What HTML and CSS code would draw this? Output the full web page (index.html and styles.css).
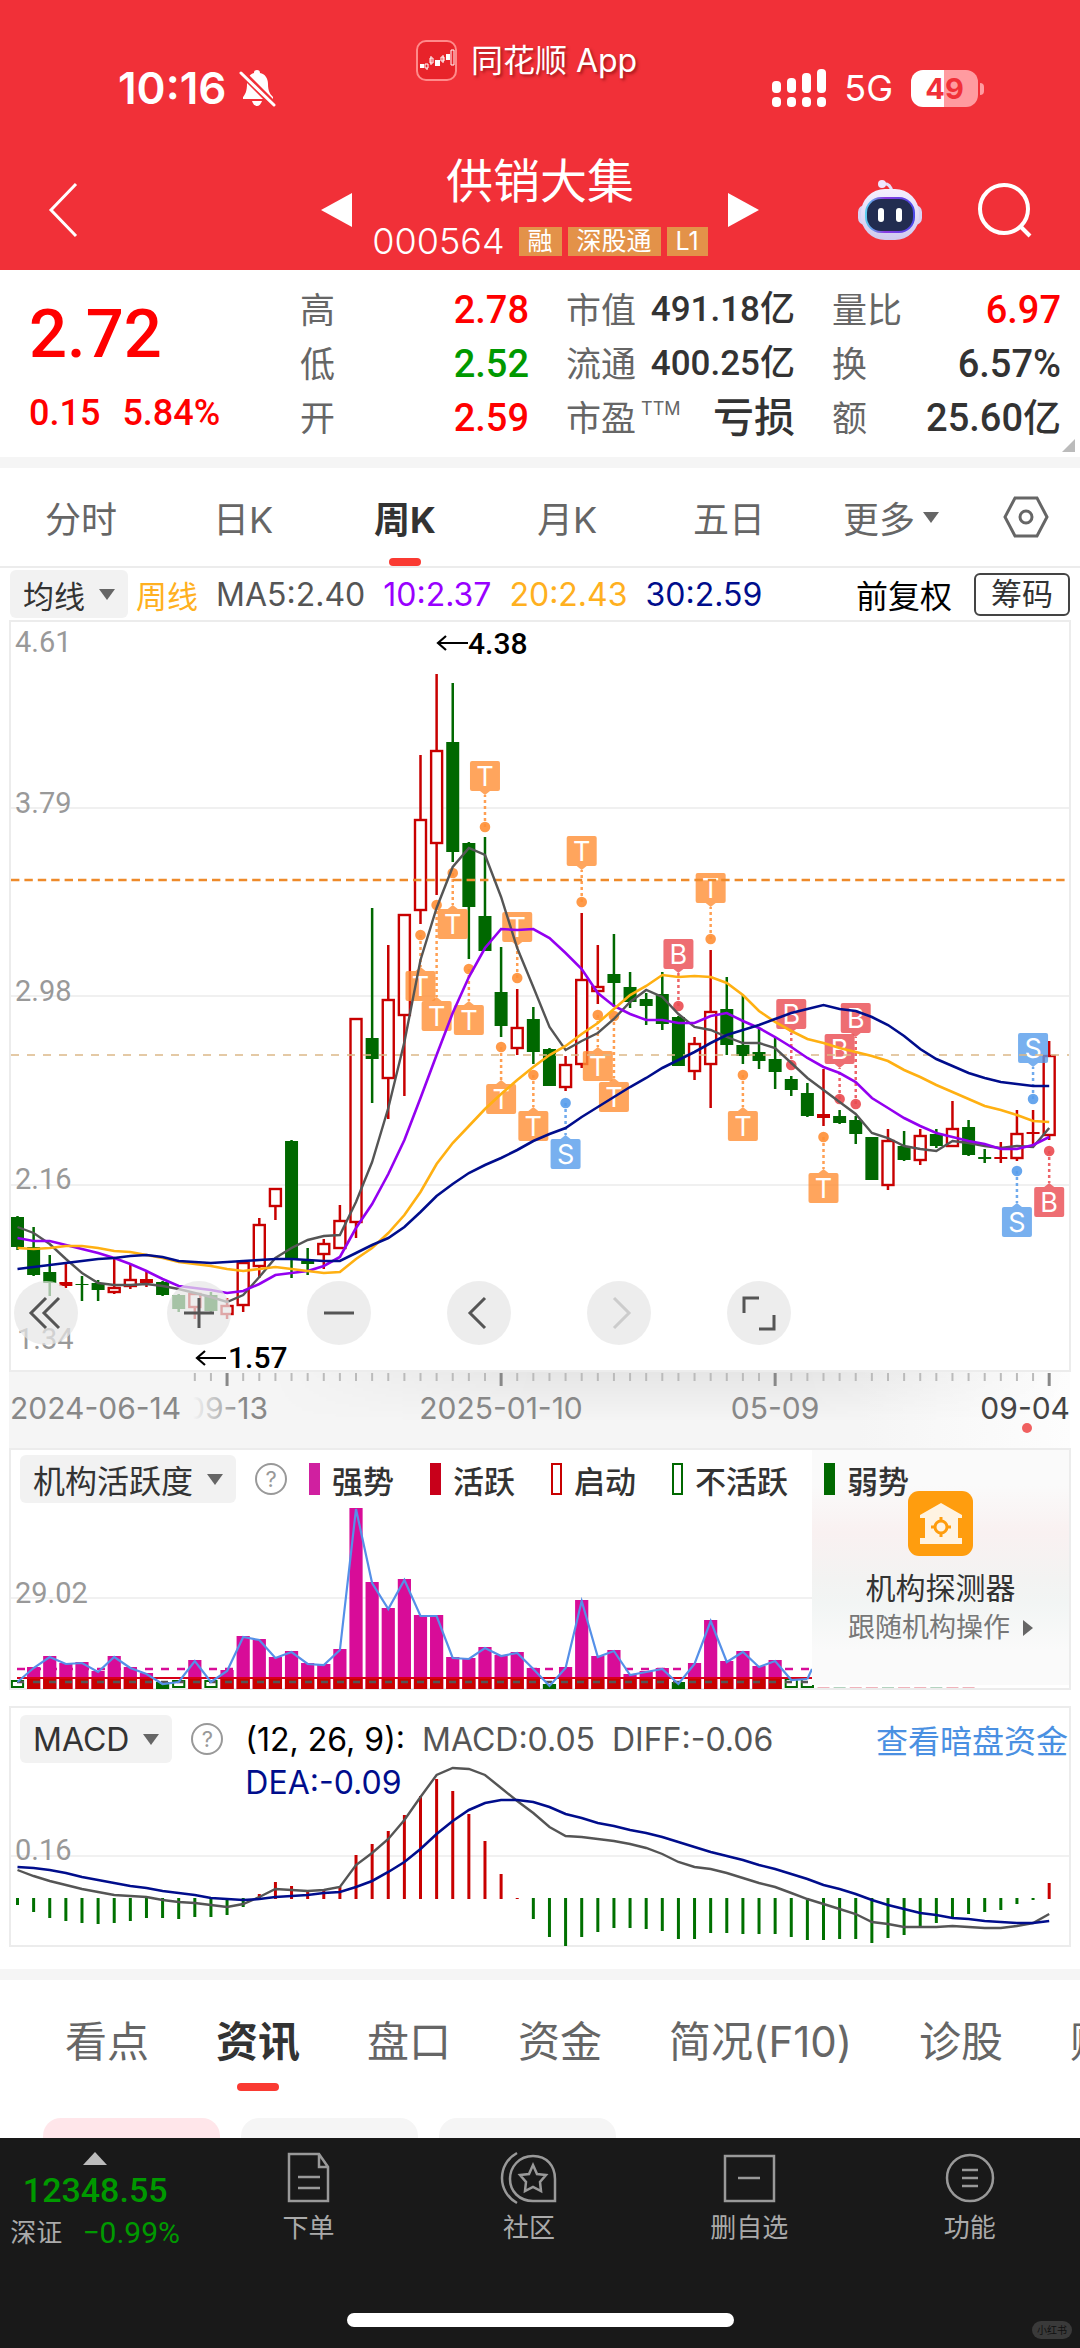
FILE: index.html
```
<!DOCTYPE html>
<html lang="zh-CN">
<head>
    <meta charset="UTF-8">
    <meta name="viewport" content="width=device-width, initial-scale=1.0">
    <title>供销大集 000564</title>
    <link rel="stylesheet" href="styles.css">
</head>
<body>
    <div class="app">
        <!-- Header -->
        <header class="header">
            <div class="status-bar">
                <div class="status-left">
                    <span class="clock">10:16</span>
                    <svg width="38" height="38" viewBox="0 0 38 38" fill="#fff">
                        <path d="M19 1c2 0 3 1 3 3 5 1 8 5 8 11 0 7 2 10 5 13v2H5v-2c2-2 4-6 4-13C9 9 12 5 16 4c0-2 1-3 3-3z"/>
                        <path d="M14 32h10c-1 3-3 5-5 5s-4-2-5-5z"/>
                        <path d="M3 3l33 33" stroke="#f13038" stroke-width="7"/>
                        <path d="M3 4l33 32" stroke="#fff" stroke-width="3" stroke-linecap="round"/>
                    </svg>
                </div>
                <div class="app-mark">
                    <svg width="41" height="41" viewBox="0 0 41 41" fill="none">
                        <rect x="1" y="1" width="39" height="39" rx="9" fill="#e8232a" stroke="#ff8a8a" stroke-width="2"/>
                        <path d="M4 24h4v4H4zM19 20h5v6h-5zM30 14h4v6h-4z" fill="#fff"/>
                        <path d="M9 24h3v4H9zM11 28v2M14 18h3v5h-3zM15 16v9M25 17h3v4h-3zM27 15v8M35 10h3v15h-3z" stroke="#fff"/>
                    </svg>
                    <span>同花顺 App</span>
                </div>
                <div class="status-right">
                    <svg width="54" height="38" viewBox="0 0 54 38" fill="#fff">
                        <rect x="0" y="12" width="9" height="12" rx="4"/><rect x="15" y="9" width="9" height="15" rx="4"/><rect x="30" y="4" width="9" height="20" rx="4"/><rect x="45" y="0" width="9" height="24" rx="4"/>
                        <rect x="0" y="28" width="9" height="10" rx="4"/><rect x="15" y="28" width="9" height="10" rx="4"/><rect x="30" y="28" width="9" height="10" rx="4"/><rect x="45" y="28" width="9" height="10" rx="4"/>
                    </svg>
                    <span class="network">5G</span>
                    <span class="battery"><b>4</b><b class="pink">9</b></span>
                </div>
            </div>
            <div class="title-bar">
                <button class="icon-btn back" aria-label="返回">
                    <svg width="32" height="54" viewBox="0 0 32 54" fill="none" stroke="#fff" stroke-width="3"><path d="M28 1L3 27l25 26"/></svg>
                </button>
                <div class="stock">
                    <button class="icon-btn" aria-label="上一只"><svg width="31" height="34" viewBox="0 0 31 34" fill="#fff"><path d="M0 17L31 0v34z"/></svg></button>
                    <div class="stock-name">
                        <h1>供销大集</h1>
                        <p><span class="code">000564</span><span class="tag">融</span><span class="tag">深股通</span><span class="tag">L1</span></p>
                    </div>
                    <button class="icon-btn" aria-label="下一只"><svg width="31" height="34" viewBox="0 0 31 34" fill="#fff"><path d="M31 17L0 0v34z"/></svg></button>
                </div>
                <div class="tools">
                    <button class="icon-btn" aria-label="智能助手">
                        <svg width="66" height="62" viewBox="0 0 66 62">
                            <defs>
                                <linearGradient id="shell" x2="0" y2="1"><stop offset="0" stop-color="#f5efff"/><stop offset="1" stop-color="#cfc9ee"/></linearGradient>
                                <linearGradient id="rim"><stop offset="0" stop-color="#5ad2f0"/><stop offset=".4" stop-color="#8a3ae0"/><stop offset="1" stop-color="#4a4ae8"/></linearGradient>
                            </defs>
                            <path d="M25 5c6-1 9 2 10 8" fill="none" stroke="#e6def8" stroke-width="3"/>
                            <circle cx="25" cy="5" r="4" fill="#efe6ff"/>
                            <rect x="1" y="26" width="64" height="20" rx="7" fill="#d8d2f4"/>
                            <rect x="4" y="10" width="58" height="51" rx="24" fill="url(#shell)"/>
                            <rect x="8" y="18" width="50" height="36" rx="16" fill="url(#rim)"/>
                            <rect x="10" y="20" width="46" height="32" rx="14" fill="#222c50"/>
                            <rect x="21" y="29" width="6" height="14" rx="3" fill="#fff"/><rect x="39" y="29" width="6" height="14" rx="3" fill="#fff"/>
                        </svg>
                    </button>
                    <button class="icon-btn" aria-label="搜索">
                        <svg width="54" height="54" viewBox="0 0 54 54" fill="none" stroke="#fff" stroke-width="4"><circle cx="26" cy="26" r="24"/><path d="M42 43l10 10"/></svg>
                    </button>
                </div>
            </div>
        </header>

        <!-- Quote -->
        <section class="quote">
            <div class="price">
                <div class="last">2.72</div>
                <div class="change"><span>0.15</span><span>5.84%</span></div>
            </div>
            <dl>
                <div><dt>高</dt><dd class="up">2.78</dd></div>
                <div><dt>低</dt><dd class="down">2.52</dd></div>
                <div><dt>开</dt><dd class="up">2.59</dd></div>
            </dl>
            <dl class="narrow">
                <div><dt>市值</dt><dd>491.18亿</dd></div>
                <div><dt>流通</dt><dd>400.25亿</dd></div>
                <div><dt>市盈<sup>TTM</sup></dt><dd class="loss">亏损</dd></div>
            </dl>
            <dl>
                <div><dt>量比</dt><dd class="up">6.97</dd></div>
                <div><dt>换</dt><dd>6.57%</dd></div>
                <div><dt>额</dt><dd>25.60亿</dd></div>
            </dl>
        </section>

        <!-- Period tabs -->
        <nav class="period-tabs">
            <button>分时</button>
            <button>日K</button>
            <button class="active">周K</button>
            <button>月K</button>
            <button>五日</button>
            <button>更多<i class="caret"></i></button>
            <button aria-label="设置">
                <svg width="46" height="42" viewBox="0 0 46 42" fill="none" stroke="#666" stroke-width="3"><path d="M12 2h22l10 19-10 19H12L2 21z"/><circle cx="23" cy="21" r="6"/></svg>
            </button>
        </nav>

        <div class="ma-row">
            <button class="select-btn">均线<i class="caret"></i></button>
            <span class="orange">周线</span>
            <span class="grey ma">MA5:2.40</span>
            <span class="purple ma">10:2.37</span>
            <span class="orange ma">20:2.43</span>
            <span class="navy ma">30:2.59</span>
            <span class="adjust">前复权</span>
            <button class="chips-btn">筹码</button>
        </div>

        <!-- K line -->
        <section class="panel kline">
            <svg id="kline" viewBox="11 2 1058 748">
                <g class="grid"><path d="M11 188H1069M11 376H1069M11 565H1069"/></g>
                <g class="axis-text">
                    <text x="15" y="32">4.61</text><text x="15" y="193">3.79</text><text x="15" y="381">2.98</text><text x="15" y="569">2.16</text><text x="17" y="729">1.34</text>
                </g>
            </svg>
            <div class="chart-tools">
                <button aria-label="最左"><svg viewBox="0 0 64 64"><path d="M32 17L17 32l15 15M45 17L30 32l15 15"/></svg></button>
                <button aria-label="放大"><svg viewBox="0 0 64 64"><path d="M17 32h30M32 17v30"/></svg></button>
                <button aria-label="缩小"><svg viewBox="0 0 64 64"><path d="M17 32h30"/></svg></button>
                <button aria-label="左移"><svg viewBox="0 0 64 64"><path d="M38 17L23 32l15 15"/></svg></button>
                <button aria-label="右移" disabled><svg viewBox="0 0 64 64"><path d="M27 17l15 15-15 15"/></svg></button>
                <button aria-label="全屏"><svg viewBox="0 0 64 64"><path d="M17 32V17h15M47 34v14H32"/></svg></button>
            </div>
        </section>
        <svg class="date-axis" id="dates" viewBox="0 0 1080 76">
            <defs>
                <linearGradient id="strip"><stop offset="0" stop-color="#f5f5f5"/><stop offset=".8" stop-color="#f5f5f5"/><stop offset="1" stop-color="#fdfdfd"/></linearGradient>
                <linearGradient id="shade" x2="0" y2="1"><stop offset="0" stop-color="#000" stop-opacity=".06"/><stop offset="1" stop-color="#000" stop-opacity="0"/></linearGradient>
                <linearGradient id="shadeMask"><stop offset=".1" stop-color="#000"/><stop offset=".4" stop-color="#fff"/><stop offset=".7" stop-color="#fff"/><stop offset="1" stop-color="#000"/></linearGradient>
                <linearGradient id="fade"><stop offset="0" stop-color="#f5f5f5"/><stop offset="1" stop-color="#f5f5f5" stop-opacity="0"/></linearGradient>
                <mask id="shadeArea"><rect x="180" width="890" height="76" fill="url(#shadeMask)"/></mask>
            </defs>
            <rect x="9" width="1061" height="76" fill="url(#strip)"/>
            <rect x="180" width="890" height="50" fill="url(#shade)" mask="url(#shadeArea)"/>
            <g id="ticks"></g>
            <text x="227" y="47" text-anchor="middle">09-13</text>
            <rect x="9" y="16" width="184" height="48" fill="#f5f5f5"/>
            <rect x="193" y="16" width="50" height="48" fill="url(#fade)"/>
            <text x="10" y="47">2024-06-14</text>
            <text x="501" y="47" text-anchor="middle">2025-01-10</text>
            <text x="775" y="47" text-anchor="middle">05-09</text>
            <text x="1070" y="47" text-anchor="end" class="now">09-04</text>
            <circle cx="1027" cy="56" r="5" fill="#f06060"/>
        </svg>

        <!-- Institution activity -->
        <section class="panel">
            <aside class="detector">
                <svg width="65" height="65" viewBox="0 0 65 65">
                    <rect width="65" height="65" rx="11" fill="#ff9d0e"/>
                    <path d="M33 12l21 12v3h-4v20h4v6H12v-6h5V27h-5v-3z" fill="#fff3e2"/>
                    <circle cx="33" cy="36" r="6" fill="none" stroke="#ff9d0e" stroke-width="3"/>
                    <path d="M33 26v4M33 42v4M23 36h4M39 36h4" stroke="#ff9d0e" stroke-width="3"/>
                </svg>
                <strong>机构探测器</strong>
                <a href="#">跟随机构操作<i></i></a>
            </aside>
            <div class="panel-head">
                <button class="select-btn">机构活跃度<i class="caret"></i></button>
                <button class="help" aria-label="说明">?</button>
                <ul class="legend">
                    <li><i class="strong"></i>强势</li>
                    <li><i class="active-bar"></i>活跃</li>
                    <li><i class="start"></i>启动</li>
                    <li><i class="idle"></i>不活跃</li>
                    <li><i class="weak"></i>弱势</li>
                </ul>
            </div>
            <svg id="activity" viewBox="11 68 1058 180">
                <g class="grid"><path d="M11 158H812"/></g>
                <g class="axis-text"><text x="15" y="163">29.02</text></g>
            </svg>
        </section>

        <!-- MACD -->
        <section class="panel macd">
            <div class="panel-head">
                <button class="select-btn">MACD<i class="caret"></i></button>
                <button class="help" aria-label="说明">?</button>
                <div class="macd-values">
                    <span>(12, 26, 9):</span>
                    <span class="grey">MACD:0.05</span>
                    <span class="grey">DIFF:-0.06</span>
                    <span class="navy dea">DEA:-0.09</span>
                </div>
                <a href="#">查看暗盘资金</a>
            </div>
            <svg id="macd" viewBox="11 66 1058 179">
                <g class="grid"><path d="M11 156H1069"/></g>
                <g class="axis-text"><text x="15" y="160">0.16</text></g>
            </svg>
        </section>

        <!-- Info tabs -->
        <nav class="info-tabs">
            <button>看点</button>
            <button class="active">资讯</button>
            <button>盘口</button>
            <button>资金</button>
            <button>简况(F10)</button>
            <button>诊股</button>
            <button>财务</button>
        </nav>
        <div class="chips"><span class="on"></span><span></span><span></span></div>

        <!-- Bottom bar -->
        <footer class="bottom">
            <div class="bottom-row">
                <div class="index">
                    <i></i>
                    <strong>12348.55</strong>
                    <p><span>深证</span><em>−0.99%</em></p>
                </div>
                <a href="#"><svg viewBox="0 0 56 52"><path d="M8 2h30l9 13v34H8zM38 2v13h9M17 25h22M17 36h22"/></svg>下单</a>
                <a href="#"><svg viewBox="0 0 56 52"><path d="M54 49H32C18 49 9 39 9 27S18 4 32 4s22 10 22 23zM16 1C-4 12-4 40 16 51"/><path d="M32 13l4 9 9 1-6 7 1 9-8-4-8 4 1-9-6-7 9-1z"/></svg>社区</a>
                <a href="#"><svg viewBox="0 0 56 52"><path d="M4 4h49v45H4zM17 26h22"/></svg>删自选</a>
                <a href="#"><svg viewBox="0 0 56 52"><circle cx="28" cy="26" r="23"/><path d="M20 18h16M20 26h16M20 34h16"/></svg>功能</a>
            </div>
            <div class="home-bar"></div>
            <span class="watermark">小红书</span>
        </footer>
    </div>
    <script src="script.js"></script>
</body>
</html>
```

FILE: styles.css
```
* {
    box-sizing: border-box;
}
body {
    margin: 0;
    background-color: #fff;
    color: #333;
    font-family: Inter, "Noto Sans CJK SC", sans-serif;
}
button {
    padding: 0;
    border: none;
    background: none;
    color: inherit;
    font-family: inherit;
    cursor: pointer;
}
a {
    color: inherit;
    text-decoration: none;
}
svg {
    display: block;
    overflow: visible;
}
h1, p, dl, dd, ul {
    margin: 0;
    padding: 0;
}
.app {
    display: flex;
    flex-direction: column;
    min-height: 100vh;
    overflow: hidden;
}

/* header */
.header {
    background-color: #f13038;
    color: #fff;
}
.status-bar {
    display: grid;
    grid-template-columns: 299fr auto 342fr;
    padding: 40px 102px 0 118px;
    height: 107px;
}
.status-left, .status-right {
    display: flex;
    align-items: center;
    align-self: end;
    height: 38px;
    gap: 12px;
}
.status-right {
    justify-content: flex-end;
    gap: 18px;
}
.clock {
    font-size: 44px;
    font-weight: 600;
}
.app-mark {
    display: flex;
    gap: 14px;
    height: 41px;
    line-height: 41px;
    font-size: 32px;
    text-shadow: 2px 2px 3px rgba(90,0,0,0.5);
}
.network {
    font-size: 36px;
}
.battery {
    position: relative;
    display: flex;
    justify-content: center;
    width: 67px;
    height: 37px;
    line-height: 37px;
    border-radius: 12px;
    background: linear-gradient(90deg, #fff 50%, #ff9ba0 50%);
    color: #f13038;
    font-size: 29px;
}
.battery::after {
    content: "";
    position: absolute;
    right: -6px;
    top: 13px;
    width: 4px;
    height: 12px;
    border-radius: 0 4px 4px 0;
    background-color: #ff9ba0;
}
.title-bar {
    display: grid;
    grid-template-columns: 1fr auto 1fr;
    align-items: center;
    padding: 43px 48px 0;
}
.icon-btn {
    display: block;
}
.back {
    justify-self: start;
}
.stock {
    display: flex;
    align-items: center;
    gap: 20px;
}
.stock-name {
    text-align: center;
}
.stock-name h1 {
    font-size: 47px;
    font-weight: 400;
    line-height: 62px;
}
.stock-name p {
    display: flex;
    align-items: center;
    gap: 6px;
    height: 58px;
}
.code {
    margin-right: 8px;
    font-size: 36px;
    font-weight: 300;
}
.tag {
    padding: 0 9px;
    background-color: #e39249;
    font-size: 25px;
    line-height: 29px;
}
.tools {
    display: flex;
    justify-content: flex-end;
    align-items: center;
    gap: 55px;
}

/* quote */
.quote {
    position: relative;
    display: grid;
    grid-template-columns: 234fr 229fr 229fr 229fr;
    column-gap: 37px;
    padding: 14px 19px 12px 29px;
    margin-top: -1px;
    border-bottom: 11px solid #f5f5f5;
}
.quote::after {
    content: "";
    position: absolute;
    right: 5px;
    bottom: 5px;
    border: solid transparent;
    border-width: 0 0 13px 13px;
    border-bottom-color: #bbb;
}
.price {
    color: #f00;
    font-family: Roboto, sans-serif;
    font-weight: 500;
}
.last {
    padding-top: 12px;
    font-size: 67px;
    line-height: 78px;
}
.change {
    display: flex;
    gap: 22px;
    padding-top: 17px;
    font-size: 36px;
    line-height: 46px;
}
.quote dl div {
    display: flex;
    justify-content: space-between;
    height: 54px;
    line-height: 54px;
}
.quote dt {
    font-size: 35px;
    color: #666;
    white-space: nowrap;
}
.quote dd {
    font-family: Roboto, "Noto Sans CJK SC", sans-serif;
    font-size: 38px;
    font-weight: 500;
    white-space: nowrap;
}
.quote .narrow dd {
    font-size: 35px;
}
.quote .narrow .loss {
    font-size: 41px;
}
.quote sup {
    margin-left: 5px;
    font-size: 18px;
    line-height: 1;
    vertical-align: 16px;
}
.quote .up {
    color: #f00;
}
.quote .down {
    color: #090;
}

/* tabs above the chart */
.period-tabs {
    display: grid;
    grid-template-columns: repeat(6, 3fr) 2fr;
    height: 100px;
    border-bottom: 2px solid #ececec;
    font-size: 36px;
    color: #666;
}
.period-tabs button {
    position: relative;
    display: flex;
    align-items: center;
    justify-content: center;
    font-size: 36px;
}
.active {
    color: #333;
    font-weight: 700;
}
.period-tabs .active::after, .info-tabs .active::after {
    content: "";
    position: absolute;
    left: calc(50% - 16px);
    bottom: 0;
    width: 32px;
    height: 8px;
    border-radius: 4px;
    background-color: #fa3a32;
}
.info-tabs .active::after {
    left: calc(50% - 21px);
    width: 42px;
}
.caret {
    display: inline-block;
    margin-left: 14px;
    border: solid transparent;
    border-width: 11px 8px 0;
    border-top-color: #666;
}
.period-tabs .caret {
    margin-left: 8px;
}
.select-btn {
    display: flex;
    align-items: center;
    height: 48px;
    padding: 0 13px;
    border-radius: 6px;
    background-color: #f2f2f2;
    font-size: 32px;
}
.ma-row {
    display: flex;
    align-items: center;
    height: 52px;
    padding: 0 10px;
    font-size: 32px;
    white-space: nowrap;
}
.ma-row .select-btn, .ma-row > .orange:not(.ma) {
    font-size: 31px;
}
.ma-row > span {
    margin-left: 8px;
}
.ma-row > .ma {
    margin-left: 18px;
}
.ma-row > .adjust {
    margin-left: auto;
    margin-right: 22px;
    color: #000;
}
.chips-btn {
    width: 96px;
    height: 43px;
    border: 2px solid #444;
    border-radius: 6px;
    font-size: 31px;
    line-height: 36px;
}
.orange {
    color: #ffb020;
}
.grey {
    color: #555;
}
.purple {
    color: #9900ff;
}
.navy {
    color: #000d8c;
}

/* chart panels */
.panel {
    position: relative;
    margin: 0 9px;
    border: 2px solid #ececec;
}
.panel > svg {
    width: 100%;
}
.grid {
    stroke: #ececec;
    stroke-width: 1.5;
}
.axis-text {
    fill: #999;
    font-family: Roboto, sans-serif;
    font-size: 29px;
}
.mark-text {
    font-family: Roboto, sans-serif;
    font-size: 30px;
    font-weight: 500;
}
.signal text {
    fill: #fff;
    font-size: 27px;
    text-anchor: middle;
}
.chart-tools {
    position: absolute;
    left: 3px;
    bottom: 25px;
    display: flex;
    gap: 76px;
}
.chart-tools button {
    width: 64px;
    height: 64px;
    border-radius: 50%;
    background-color: rgba(230,230,230,0.72);
}
.chart-tools button:first-child {
    margin-right: 13px;
}
.chart-tools path {
    fill: none;
    stroke: #555;
    stroke-width: 3;
}
.chart-tools button:disabled path {
    stroke: #ccc;
}
.date-axis {
    width: 100%;
    fill: #888;
    font-size: 30px;
}
.date-axis .now {
    fill: #444;
}
.panel-head {
    position: relative;
    display: flex;
    align-items: center;
    height: 58px;
    padding-left: 9px;
}
.help {
    width: 32px;
    height: 32px;
    margin: 0 22px 0 19px;
    border: 2px solid #999;
    border-radius: 50%;
    color: #999;
    font-size: 22px;
    line-height: 28px;
}
.legend {
    display: flex;
    gap: 36px;
    list-style: none;
    font-size: 31px;
    font-weight: 500;
    white-space: nowrap;
}
.legend li {
    display: flex;
    align-items: center;
    gap: 12px;
}
.legend i {
    width: 11px;
    height: 32px;
    border: 2px solid;
}
.legend .strong {
    border-color: #d020a0;
    background-color: #d020a0;
}
.legend .active-bar {
    border-color: #c8001a;
    background-color: #c8001a;
}
.legend .start {
    border-color: #c80000;
}
.legend .idle {
    border-color: #006800;
}
.legend .weak {
    border-color: #006800;
    background-color: #006800;
}
.detector {
    position: absolute;
    top: 0;
    right: 0;
    bottom: 3px;
    width: 257px;
    display: flex;
    flex-direction: column;
    align-items: center;
    padding-top: 41px;
    background: linear-gradient(#fafafa 15%, #f9f1f1 35%, #f3f3f2 55%, #f2f5f4 65%, #fafafa 85%);
    white-space: nowrap;
}
.detector strong {
    margin-top: 12px;
    font-size: 30px;
    font-weight: 400;
    line-height: 40px;
}
.detector a {
    display: flex;
    align-items: center;
    font-size: 27px;
    line-height: 40px;
    color: #777;
}
.detector a i {
    margin-left: 13px;
    border: solid transparent;
    border-width: 8px 0 8px 10px;
    border-left-color: #666;
}
.macd {
    margin-top: 16px;
}
.macd .panel-head {
    padding-top: 4px;
}
.macd-values {
    display: flex;
    gap: 17px;
    font-size: 32px;
    color: #000;
    white-space: nowrap;
}
.macd-values .grey {
    color: #555;
}
.macd-values .dea {
    position: absolute;
    top: 55px;
    color: #000d8c;
}
.macd .panel-head a {
    margin-left: auto;
    margin-right: 1px;
    font-size: 32px;
    color: #4a90e2;
}

/* tabs below the charts */
.info-tabs {
    display: flex;
    gap: 67px;
    margin-top: 22px;
    padding-left: 65px;
    border-top: 11px solid #f5f5f5;
    color: #666;
    white-space: nowrap;
}
.info-tabs button {
    position: relative;
    height: 111px;
    padding-top: 6px;
    flex: none;
    font-size: 42px;
}
.info-tabs .active {
    color: #333;
}
.chips {
    display: flex;
    gap: 21px;
    height: 20px;
    margin-top: 27px;
    padding-left: 43px;
}
.chips span {
    width: 177px;
    border-radius: 18px 18px 0 0;
    background-color: #f5f5f5;
}
.chips .on {
    background-color: #ffe6ea;
}

/* bottom bar */
.bottom {
    position: relative;
    flex: 1;
    background-color: #191919;
    color: #aaa;
}
.bottom-row {
    display: grid;
    grid-template-columns: 198fr repeat(4, 220fr);
    height: 175px;
    padding-top: 14px;
}
.bottom-row a {
    display: flex;
    flex-direction: column;
    align-items: center;
    font-size: 26px;
    line-height: 48px;
}
.bottom-row svg {
    width: 56px;
    height: 52px;
    fill: none;
    stroke: #999;
    stroke-width: 2.5;
}
.index {
    display: flex;
    flex-direction: column;
    align-items: center;
    padding-right: 8px;
    font-family: Roboto, "Noto Sans CJK SC", sans-serif;
    white-space: nowrap;
}
.index i {
    border: solid transparent;
    border-width: 0 12px 13px;
    border-bottom-color: #bbb;
}
.index strong {
    font-size: 34px;
    font-weight: 500;
    line-height: 50px;
    color: #090;
}
.index p {
    display: flex;
    align-items: center;
    gap: 20px;
    font-size: 26px;
    line-height: 36px;
}
.index em {
    color: #090;
    font-size: 30px;
    font-style: normal;
}
.home-bar {
    width: 387px;
    height: 14px;
    margin: 0 auto;
    border-radius: 7px;
    background-color: #fff;
}
.watermark {
    position: absolute;
    right: 8px;
    bottom: 9px;
    padding: 0 5px;
    border-radius: 9px;
    background-color: #3a3a3a;
    color: #111;
    font-size: 10px;
    line-height: 18px;
}
```

FILE: script.js
```
const RED = '#c80000';
const GREEN = '#006800';
const STEP = 16.12;
const FIRST = 17.5;

function xAt(i) {
    return FIRST + STEP * i;
}

function add(parent, name, attrs, text) {
    const el = document.createElementNS('http://www.w3.org/2000/svg', name);
    for (const key in attrs) {
        el.setAttribute(key, attrs[key]);
    }
    if (text) {
        el.textContent = text;
    }
    parent.appendChild(el);
    return el;
}

function addLine(parent, values, color, width) {
    const points = values.map((y, i) => xAt(i).toFixed(1) + ',' + y).join(' ');
    add(parent, 'polyline', { points: points, fill: 'none', stroke: color, 'stroke-width': width });
}

// [direction, high, body top, body bottom, low]
const candles = [
    ['g', 596, 597, 627, 630], ['g', 607, 627, 655, 656], ['g', 635, 652, 663, 676], ['r', 643, 662, 666, 668],
    ['g', 656, 664, 665, 681], ['g', 660, 663, 670, 681], ['r', 638, 667, 673, 674], ['r', 645, 659, 667, 669],
    ['r', 652, 659, 663, 667], ['g', 661, 662, 675, 676], ['g', 674, 675, 689, 692], ['r', 672, 673, 688, 699],
    ['g', 672, 675, 691, 693], ['r', 678, 685, 695, 699], ['r', 642, 642, 686, 692], ['r', 598, 604, 647, 658],
    ['r', 568, 568, 587, 600], ['g', 520, 521, 639, 658], ['g', 628, 641, 644, 655], ['r', 619, 623, 635, 649],
    ['r', 585, 600, 629, 629], ['r', 398, 398, 603, 618], ['g', 288, 418, 439, 483], ['r', 325, 379, 459, 499],
    ['r', 294, 294, 396, 476], ['r', 135, 199, 291, 304], ['r', 54, 130, 224, 275], ['g', 63, 122, 232, 242],
    ['g', 222, 223, 287, 339], ['g', 217, 296, 331, 331], ['g', 327, 372, 406, 417], ['r', 369, 407, 429, 435],
    ['g', 387, 399, 432, 444], ['g', 428, 429, 466, 466], ['r', 436, 444, 468, 471], ['r', 293, 359, 445, 448],
    ['r', 325, 366, 372, 384], ['g', 314, 354, 363, 387], ['g', 352, 367, 382, 388], ['g', 373, 379, 386, 405],
    ['g', 352, 374, 404, 410], ['g', 396, 397, 446, 446], ['r', 417, 423, 452, 460], ['r', 330, 391, 445, 488],
    ['g', 357, 389, 425, 435], ['g', 375, 425, 436, 444], ['g', 409, 432, 441, 449], ['g', 417, 439, 452, 469],
    ['g', 456, 459, 470, 476], ['g', 463, 473, 496, 497], ['r', 449, 494, 498, 506], ['g', 490, 496, 503, 504],
    ['g', 496, 500, 514, 524], ['g', 517, 517, 560, 560], ['r', 509, 520, 566, 570], ['g', 511, 526, 540, 541],
    ['r', 509, 515, 541, 545], ['g', 509, 514, 526, 528], ['r', 481, 508, 527, 527], ['g', 500, 507, 535, 536],
    ['g', 529, 537, 539, 543], ['r', 522, 537, 539, 543], ['r', 490, 513, 539, 541], ['r', 490, 512, 514, 525],
    ['r', 421, 435, 516, 520]
];

const ma5 = [607, 613, 624, 639, 653, 663, 665, 665, 664, 666, 669, 673, 677, 682, 675, 657, 638, 628, 620, 616, 615, 582, 542, 488, 422, 340, 288, 247, 228, 235, 277, 328, 367, 407, 430, 421, 413, 399, 382, 370, 377, 394, 407, 410, 417, 423, 423, 428, 443, 458, 470, 482, 494, 513, 518, 526, 529, 531, 521, 523, 526, 528, 526, 527, 508];
const ma10 = [618, 621, 621, 625, 629, 633, 638, 644, 651, 659, 666, 668, 670, 673, 671, 664, 655, 653, 651, 646, 637, 608, 584, 554, 520, 478, 435, 393, 357, 328, 309, 310, 309, 318, 333, 349, 373, 386, 394, 400, 400, 403, 403, 396, 393, 401, 408, 417, 427, 438, 447, 453, 462, 478, 488, 498, 506, 513, 517, 521, 524, 529, 529, 525, 517];
const ma20 = [628, 629, 628, 626, 626, 628, 631, 632, 635, 638, 642, 644, 646, 649, 651, 649, 647, 649, 651, 653, 652, 639, 628, 613, 595, 572, 544, 523, 506, 489, 474, 460, 447, 435, 426, 414, 403, 389, 375, 366, 355, 357, 356, 357, 363, 375, 391, 402, 411, 419, 423, 428, 432, 436, 441, 450, 457, 465, 472, 479, 486, 490, 495, 501, 502];
const ma30 = [649, 647, 645, 643, 641, 639, 638, 636, 635, 637, 641, 642, 643, 642, 641, 640, 639, 639, 640, 641, 641, 633, 625, 618, 607, 592, 576, 564, 553, 545, 538, 530, 521, 514, 508, 497, 487, 477, 467, 458, 448, 440, 432, 423, 415, 410, 405, 399, 393, 389, 385, 389, 391, 397, 405, 416, 429, 439, 446, 453, 458, 462, 464, 466, 466];

// [index, letter, dot y, tag top]
const signals = [
    [25, 'T', 315, 351], [26, 'T', 285, 381], [27, 'T', 253, 289], [28, 'T', 349, 385], [29, 'T', 207, 141],
    [30, 'T', 427, 464], [31, 'T', 358, 292], [32, 'T', 455, 491], [34, 'S', 483, 519], [35, 'T', 282, 216],
    [36, 'T', 395, 431], [37, 'T', 396, 462], [41, 'B', 386, 319], [43, 'T', 319, 253], [45, 'T', 455, 491],
    [48, 'B', 445, 379], [50, 'T', 517, 553], [51, 'B', 479, 414], [52, 'B', 484, 383], [62, 'S', 551, 587],
    [63, 'S', 479, 413], [64, 'B', 531, 567]
];
const signalColors = { T: '#ff8f35', B: '#ea4a50', S: '#569ceb' };

function drawKline() {
    const svg = document.getElementById('kline');
    candles.forEach(([dir, high, top, bottom, low], i) => {
        const color = dir === 'r' ? RED : GREEN;
        const x = xAt(i);
        const solid = dir === 'g' || bottom - top < 5;
        add(svg, 'path', { d: `M${x} ${high}V${top}M${x} ${bottom}V${low}`, stroke: color, 'stroke-width': 2.5 });
        if (solid) {
            add(svg, 'rect', { x: x - 6.5, y: top, width: 13, height: bottom - top, fill: color });
        } else {
            add(svg, 'rect', { x: x - 5.5, y: top + 1, width: 11, height: bottom - top - 2, fill: '#fff', stroke: color, 'stroke-width': 2.4 });
        }
    });

    signals.forEach(([i, letter, dot, top]) => {
        const color = signalColors[letter];
        const x = xAt(i);
        const below = top > dot;
        const edge = below ? top : top + 30;
        const tip = below ? edge - 4 : edge + 4;
        const g = add(svg, 'g', { class: 'signal' });
        add(g, 'path', { d: `M${x} ${dot}V${tip}`, stroke: color, 'stroke-width': 2.5, 'stroke-dasharray': '3 3', opacity: 0.85 });
        add(g, 'circle', { cx: x, cy: dot, r: 5.3, fill: color, opacity: 0.9 });
        add(g, 'rect', { x: x - 15, y: top, width: 30, height: 30, rx: 2, fill: color, opacity: 0.8 });
        add(g, 'path', { d: `M${x - 5} ${edge}L${x} ${tip}L${x + 5} ${edge}z`, fill: color, opacity: 0.8 });
        add(g, 'text', { x: x, y: top + 25 }, letter);
    });

    add(svg, 'path', { d: 'M11 260H1069', stroke: '#ee8a2a', 'stroke-width': 2.5, 'stroke-dasharray': '8.4 5' });
    add(svg, 'path', { d: 'M11 435H1069', stroke: '#dcb888', 'stroke-width': 1.5, 'stroke-dasharray': '8 8' });
    addLine(svg, ma5, '#555', 2.4);
    addLine(svg, ma10, '#9400f0', 2.6);
    addLine(svg, ma20, '#ffb012', 2.6);
    addLine(svg, ma30, '#000d8c', 2.6);

    add(svg, 'path', { d: 'M468 23H438M446 16L438 23L446 30M226 738H197M205 731L197 738L205 745', fill: 'none', stroke: '#000', 'stroke-width': 2.2 });
    add(svg, 'text', { x: 468, y: 34, class: 'mark-text' }, '4.38');
    add(svg, 'text', { x: 228, y: 748, class: 'mark-text' }, '1.57');
}

function drawTicks() {
    const g = document.getElementById('ticks');
    for (let i = 11; i < 65; i++) {
        const major = (i - 13) % 17 === 0;
        add(g, 'path', { d: `M${xAt(i)} 1V${major ? 14 : 9}`, stroke: major ? '#888' : '#bbb', 'stroke-width': major ? 3 : 2 });
    }
}

// m: strong, w: weak, h: inactive (hollow)
const activity = [
    ['h', 241], ['m', 227], ['m', 216], ['m', 223], ['m', 222], ['m', 231], ['m', 216], ['m', 227], ['m', 233], ['w', 243],
    ['h', 241], ['m', 220], ['h', 241], ['m', 230], ['m', 196], ['m', 199], ['m', 217], ['m', 211], ['m', 223], ['m', 224],
    ['m', 209], ['m', 68], ['m', 142], ['m', 168], ['m', 139], ['m', 175], ['m', 175], ['m', 217], ['m', 218], ['m', 207],
    ['m', 215], ['m', 212], ['m', 228], ['w', 245], ['m', 227], ['m', 160], ['m', 216], ['m', 210], ['m', 234], ['m', 231],
    ['m', 228], ['w', 243], ['m', 223], ['m', 180], ['m', 221], ['m', 211], ['m', 226], ['m', 220], ['h', 239], ['h', 238]
];

function drawActivity() {
    const svg = document.getElementById('activity');
    activity.forEach(([kind, top], i) => {
        const x = xAt(i) - 6.6;
        if (kind === 'm') {
            add(svg, 'rect', { x: x, y: top, width: 13.2, height: 249 - top, fill: '#d80c98' });
            add(svg, 'rect', { x: x, y: 237, width: 13.2, height: 12, fill: RED });
        } else if (kind === 'w') {
            add(svg, 'rect', { x: x, y: top - 1, width: 13.2, height: 250 - top, fill: GREEN });
        } else {
            add(svg, 'rect', { x: x + 1, y: top, width: 11.2, height: 247 - top, fill: '#fff', stroke: GREEN, 'stroke-width': 2 });
        }
    });
    add(svg, 'path', { d: 'M17 229H812', stroke: '#d80c98', 'stroke-width': 2.5, 'stroke-dasharray': '8 8' });
    add(svg, 'path', { d: 'M17 238H812', stroke: '#d80018', 'stroke-width': 2 });
    add(svg, 'path', { d: 'M17 242H812', stroke: '#555', 'stroke-width': 2.5, 'stroke-dasharray': '7 9' });
    addLine(svg, activity.map(a => a[1] + 1), '#5590e8', 2.2);
    add(svg, 'path', { d: `M${xAt(49)} 239L812 229`, stroke: '#5590e8', 'stroke-width': 2.2 });
    // tail of the chart behind the card
    for (let i = 50; i < 60; i++) {
        add(svg, 'path', { d: `M${xAt(i) - 6} 247.5h12`, stroke: i % 3 === 0 ? '#b4d4c0' : '#f0b4bc', 'stroke-width': 1 });
    }
}

const macdBars = [205, 212, 218, 221, 223, 224, 223, 221, 218, 218, 219, 217, 217, 215, 207, 194, 182, 186, 191, 189, 187, 155, 144, 131, 115, 96, 79, 91, 114, 141, 174, 198, 219, 237, 246, 237, 232, 228, 228, 229, 231, 239, 239, 233, 233, 234, 234, 234, 237, 240, 240, 239, 239, 243, 238, 235, 227, 223, 217, 214, 212, 210, 204, 200, 183];
const diff = [170, 176, 181, 185, 189, 192, 195, 196, 197, 200, 202, 203, 205, 207, 204, 197, 189, 190, 191, 190, 187, 165, 153, 139, 120, 97, 75, 68, 69, 75, 88, 101, 113, 127, 136, 137, 139, 141, 144, 148, 154, 162, 167, 169, 173, 178, 183, 187, 193, 199, 204, 209, 214, 222, 224, 227, 227, 227, 226, 227, 228, 228, 226, 223, 214];
const dea = [167, 168, 170, 173, 177, 180, 183, 186, 188, 191, 193, 195, 198, 199, 200, 199, 197, 196, 195, 193, 192, 187, 181, 172, 162, 149, 134, 121, 110, 103, 100, 100, 102, 107, 114, 118, 123, 126, 130, 133, 137, 142, 147, 152, 156, 160, 165, 169, 174, 179, 185, 189, 194, 200, 205, 209, 213, 215, 218, 219, 221, 222, 223, 223, 221];

function drawMacd() {
    const svg = document.getElementById('macd');
    macdBars.forEach((y, i) => {
        const up = y < 199;
        add(svg, 'path', { d: `M${xAt(i)} ${up ? 199 : 198}V${y}`, stroke: up ? RED : '#007000', 'stroke-width': 3 });
    });
    addLine(svg, diff, '#555', 2.4);
    addLine(svg, dea, '#000d8c', 2.6);
}

drawKline();
drawTicks();
drawActivity();
drawMacd();
```
